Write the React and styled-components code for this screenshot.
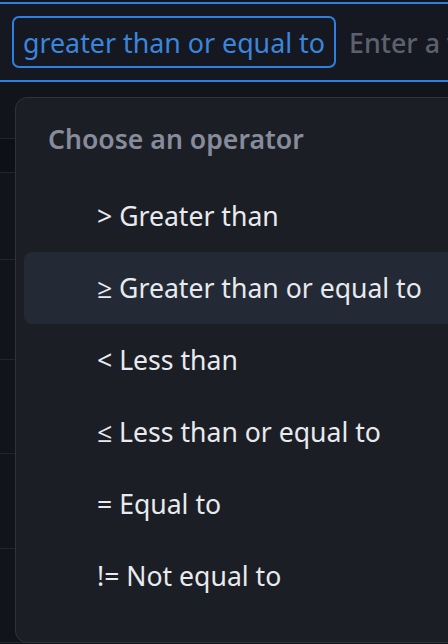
import React from "react";
import styled, { createGlobalStyle } from "styled-components";

const GlobalStyle = createGlobalStyle`
  html, body {
    margin: 0;
    height: 100%;
    background: #11141b;
    overflow: hidden;
  }
  body {
    font-family: "Noto Sans", "Open Sans", sans-serif;
  }
`;

const Page = styled.div`
  position: relative;
  width: 448px;
  height: 644px;
  padding-top: 2px;
  box-sizing: border-box;
  overflow: hidden;
`;

const FilterBar = styled.div`
  height: 80px;
  box-sizing: border-box;
  border-top: 2px solid #2f7fe0;
  border-bottom: 2px solid #2f7fe0;
  background: #151820;
  display: flex;
  align-items: center;
  gap: 13px;
  white-space: nowrap;
`;

const EdgeStub = styled.div`
  width: 1px;
  height: 40px;
  background: #2c313a;
  margin-right: -1px;
`;

const Chip = styled.div`
  height: 52px;
  box-sizing: border-box;
  padding: 0 9px;
  border: 2px solid #2f7fe0;
  border-radius: 7px;
  display: flex;
  align-items: center;
  color: #3b86dc;
  font-size: 26.8px;
`;

const Placeholder = styled.span`
  color: #5c626d;
  font-size: 26.8px;
  font-weight: 500;
`;

const Table = styled.div`
  display: flex;
  flex-direction: column;
`;

const Row = styled.div`
  height: ${(p) => p.h}px;
  border-bottom: 1px solid #21262e;
  background: ${(p) => (p.head ? "#0d1015" : "#11141b")};
`;

const Dropdown = styled.div`
  position: absolute;
  left: 15px;
  top: 97px;
  width: 480px;
  height: 546px;
  box-sizing: border-box;
  background: #1b1e25;
  border: 1px solid #2d323b;
  border-radius: 12px;
  padding: 0 8px;
`;

const Title = styled.div`
  height: 82px;
  padding-left: 24px;
  display: flex;
  align-items: center;
  color: #878c9b;
  font-size: 26.6px;
  font-weight: 600;
`;

const List = styled.ul`
  list-style: none;
  margin: 0;
  padding: 0;
`;

const Item = styled.li`
  height: 72px;
  padding-left: 73px;
  border-radius: 8px;
  display: flex;
  align-items: center;
  color: #e8eaee;
  font-size: 26.6px;
  background: ${(p) => (p.active ? "#232a35" : "transparent")};
  white-space: nowrap;
`;

const rows = [
  { h: 56 },
  { h: 33, head: true },
  { h: 86 },
  { h: 99 },
  { h: 93 },
  { h: 94 },
  { h: 93 },
];

const operators = [
  "> Greater than",
  "≥ Greater than or equal to",
  "< Less than",
  "≤ Less than or equal to",
  "= Equal to",
  "!= Not equal to",
];

export default function App() {
  return (
    <Page>
      <GlobalStyle />
      <FilterBar>
        <EdgeStub />
        <Chip>greater than or equal to</Chip>
        <Placeholder>Enter a value</Placeholder>
      </FilterBar>
      <Table>
        {rows.map((r, i) => (
          <Row key={i} h={r.h} head={r.head} />
        ))}
      </Table>
      <Dropdown>
        <Title>Choose an operator</Title>
        <List>
          {operators.map((op, i) => (
            <Item key={op} active={i === 1}>
              {op}
            </Item>
          ))}
        </List>
      </Dropdown>
    </Page>
  );
}
